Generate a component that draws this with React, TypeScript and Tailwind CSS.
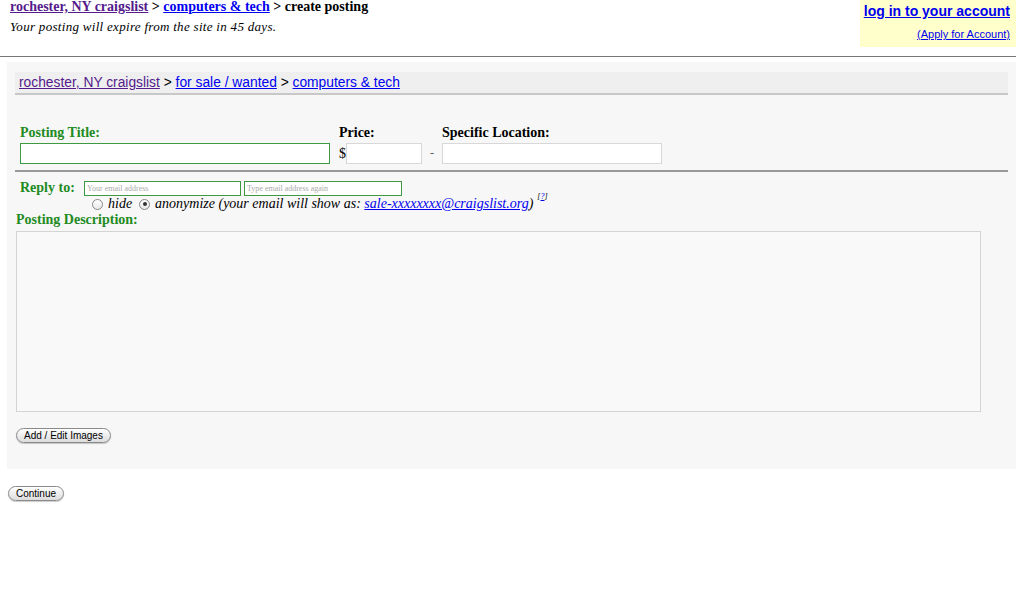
import React from 'react';

const serif = "font-['Liberation_Serif','Times_New_Roman',serif]";
const sans = "font-['Liberation_Sans',Arial,sans-serif]";

function PillButton({ label }: { label: string }) {
  return (
    <button
      className={`${sans} text-[10px] leading-none text-black px-[7px] h-[15px] rounded-full border border-[#8a8a8a] bg-gradient-to-b from-white to-[#dcdcdc] shadow-[0_1px_1px_rgba(0,0,0,0.2)]`}
    >
      {label}
    </button>
  );
}

function Radio({ checked }: { checked?: boolean }) {
  return (
    <span className="inline-flex items-center justify-center w-[11px] h-[11px] rounded-full border border-[#888] bg-gradient-to-b from-white to-[#e8e8e8] align-middle">
      {checked && <span className="w-[4px] h-[4px] rounded-full bg-[#333]" />}
    </span>
  );
}

export default function App() {
  return (
    <div className="w-[1024px] h-[600px] bg-white text-black overflow-hidden">
      {/* header */}
      <div className="flex justify-between pr-[8px]">
        <div className={`${serif} pl-[10px]`}>
          <div className="text-[14px] font-bold leading-[14px]">
            <a className="text-[#551a8b] underline">rochester, NY craigslist</a>
            {' > '}
            <a className="text-[#0000ee] underline">computers &amp; tech</a>
            {' > create posting'}
          </div>
          <div className="text-[13px] italic leading-[15px] mt-[5px] tracking-[0.3px]">
            Your posting will expire from the site in 45 days.
          </div>
        </div>
        <div className={`${sans} bg-[#ffffcc] w-[156px] h-[47px] flex flex-col items-end pr-[6px] pt-[3px]`}>
          <a className="text-[#0000ee] underline font-bold text-[14px] leading-[17px]">log in to your account</a>
          <a className="text-[#0000ee] underline text-[11px] leading-[13px] mt-[8px]">(Apply for Account)</a>
        </div>
      </div>

      <div className="h-[1px] bg-[#777] w-[1016px] mt-[9px]" />

      {/* form panel */}
      <div className="ml-[7px] mt-[5px] w-[1009px] h-[407px] bg-[#f7f7f7] pt-[10px] px-[8px]">
        <div className={`${sans} bg-[#efefef] border-b-2 border-[#c8c8c8] h-[23px] text-[13.8px] leading-[21px] pl-[4px]`}>
          <a className="text-[#551a8b] underline">rochester, NY craigslist</a>
          {' > '}
          <a className="text-[#0000ee] underline">for sale / wanted</a>
          {' > '}
          <a className="text-[#0000ee] underline">computers &amp; tech</a>
        </div>

        <div className={`${serif} flex items-end pl-[5px] mt-[30px]`}>
          <div className="flex flex-col">
            <span className="text-[14px] font-bold text-[#228b22] leading-[16px] mb-[2px]">Posting Title:</span>
            <div className="w-[310px] h-[21px] border border-[#3f9a3f] bg-white" />
          </div>
          <div className="flex flex-col ml-[9px]">
            <span className="text-[14px] font-bold leading-[16px] mb-[2px]">Price:</span>
            <div className="flex items-center">
              <span className="text-[14px] leading-[16px]">$</span>
              <div className="w-[76px] h-[21px] border border-[#d8d8d8] bg-white" />
            </div>
          </div>
          <span className="text-[12px] text-[#555] ml-[8px] mr-[8px] mb-[2px]">-</span>
          <div className="flex flex-col">
            <span className="text-[14px] font-bold leading-[16px] mb-[2px]">Specific Location:</span>
            <div className="w-[220px] h-[21px] border border-[#d8d8d8] bg-white" />
          </div>
        </div>

        <div className="h-[2px] bg-[#999] mt-[6px]" />

        <div className={`${serif} pl-[5px] mt-[8px]`}>
          <div className="flex items-center">
            <span className="text-[14px] font-bold text-[#228b22] leading-[16px] w-[64px]">Reply to:</span>
            <div className="w-[157px] h-[15px] border border-[#3f9a3f] bg-white text-[8px] text-[#aaa] leading-[13px] pl-[2px]">Your email address</div>
            <div className="w-[158px] h-[15px] border border-[#3f9a3f] bg-white text-[8px] text-[#aaa] leading-[13px] pl-[2px] ml-[3px]">Type email address again</div>
          </div>
          <div className="flex items-center italic text-[14px] leading-[16px] pl-[72px]">
            <Radio />
            <span className="ml-[5px] mr-[7px]">hide</span>
            <Radio checked />
            <span className="ml-[5px]">
              anonymize (your email will show as:{' '}
              <a className="text-[#0000ee] underline">sale-xxxxxxxx@craigslist.org</a>)
            </span>
            <sup className="text-[8px] ml-[4px] -mt-[6px]">
              [<a className="text-[#0000ee] underline">?</a>]
            </sup>
          </div>
        </div>

        <div className={`${serif} text-[14px] font-bold text-[#228b22] leading-[16px] pl-[1px]`}>Posting Description:</div>
        <div className="ml-[1px] mt-[3px] w-[965px] h-[181px] border border-[#d4d4d4] bg-[#f9f9f9]" />

        <div className="flex mt-[16px] pl-[1px]">
          <PillButton label="Add / Edit Images" />
        </div>
      </div>

      <div className="flex pl-[8px] mt-[17px]">
        <PillButton label="Continue" />
      </div>
    </div>
  );
}
